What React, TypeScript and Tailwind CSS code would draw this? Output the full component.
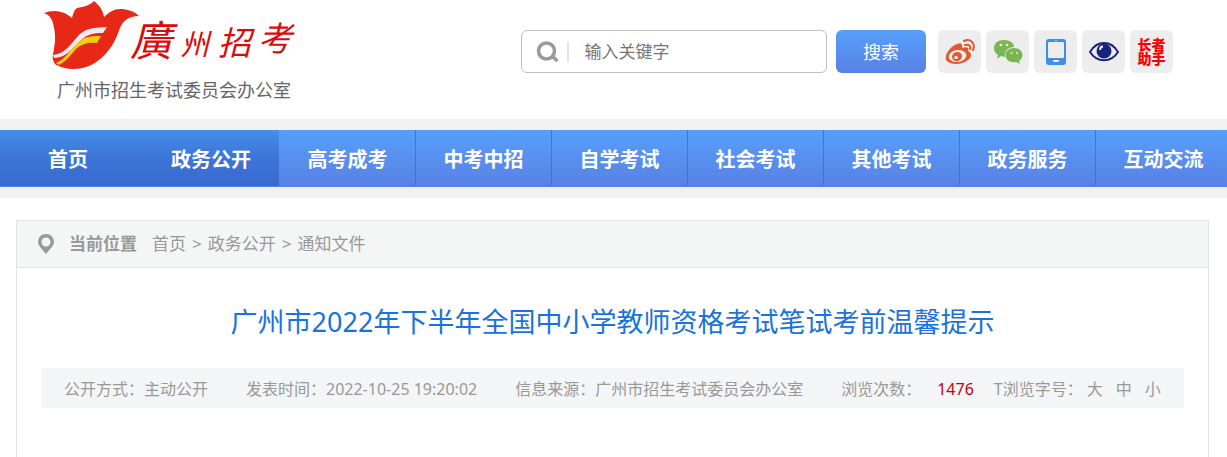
import React from "react";

const navItems = ["高考成考", "中考中招", "自学考试", "社会考试", "其他考试", "政务服务", "互动交流"];

function Logo() {
  return (
    <svg width="256" height="74" viewBox="42 0 256 74" role="img" aria-label="廣州招考">
      <path
        fill="#e82817"
        d="M44 13C49 11 55 10 61 12C66 13 69 16 72 18C73 14 74 10 77 8C84 7 90 5 94 1C99 5 103 10 104 17C109 12 114 9 120 9C127 9 134 11 139 16C130 16 123 20 120 28C117 37 113 45 108 51C99 62 88 69 73 69C66 69 61 67 56 65C53 62 52 58 53 54C55 44 56 37 54 28C53 20 50 15 44 13Z"
      />
      <path fill="#f5e9f3" d="M53 55C67 53 70 44 80 34C88 27 97 28 107 27L103 33C93 33 87 34 80 41C72 48 68 57 54 58Z" />
      <path fill="#edcf0c" d="M56 63C67 58 71 48 80 41C86 36 92 36 101 36L97 43C88 42 82 44 77 48C71 54 67 61 59 65Z" />
      <g fill="#d90b0b" className="font-['Noto_Sans_CJK_TC',sans-serif] italic">
        <text x="130" y="56" fontSize="42">廣</text>
        <text x="180" y="55" fontSize="29">州</text>
        <text x="218" y="55" fontSize="33">招</text>
        <text x="258" y="51" fontSize="34">考</text>
      </g>
    </svg>
  );
}

function WeiboIcon() {
  return (
    <svg width="32" height="28" viewBox="0 0 32 28" aria-hidden="true">
      <path fill="#e0592f" d="M13 6C17 4 19 6 18 10C23 8 26 10 24 13C28 15 28 19 24 22C18 27 7 27 3 23C-1 19 5 9 13 6Z" />
      <ellipse cx="13.500" cy="18" rx="9" ry="6" fill="#ededed" transform="rotate(-8 13.500 18)" />
      <ellipse cx="13" cy="18.500" rx="5" ry="4.500" fill="#e0592f" transform="rotate(-20 13 18.500)" />
      <ellipse cx="12" cy="19.500" rx="2" ry="1.500" fill="#ededed" />
      <path d="M20 3C26 0 32 5 29 12M21 7C25 6 27 8 26 11" fill="none" stroke="#e0592f" strokeWidth="2" strokeLinecap="round" />
    </svg>
  );
}

function WechatIcon() {
  return (
    <svg width="30" height="26" viewBox="0 0 30 26" aria-hidden="true">
      <path fill="#7bb653" d="M11 1C17 1 21 4 21 8C15 8 11 12 12 18L8 17L4 20L5 16C2 14 1 12 1 9C1 4 5 1 11 1Z" />
      <path fill="#7bb653" d="M21 9C26 9 29.500 12 29.500 16C29.500 19 28 20 26 22L27 25L23 23C17 24 12.500 21 12.500 16C12.500 12 16 9 21 9Z" />
      <g fill="#ededed">
        <circle cx="8" cy="6" r="1.300" />
        <circle cx="14" cy="6" r="1.300" />
        <circle cx="18.500" cy="14" r="1" />
        <circle cx="24" cy="14" r="1" />
      </g>
    </svg>
  );
}

function TabletIcon() {
  return (
    <svg width="20" height="26" viewBox="0 0 20 26" aria-hidden="true">
      <rect width="20" height="26" rx="3" fill="#3d8fe5" />
      <rect x="2" y="3" width="16" height="16" rx="1" fill="#ededed" />
      <rect x="7" y="21" width="6" height="2" fill="#ededed" />
      <circle cx="10" cy="1.500" r="0.700" fill="#ededed" />
    </svg>
  );
}

function EyeIcon() {
  return (
    <svg width="30" height="22" viewBox="0 0 30 22" aria-hidden="true">
      <path d="M1 11C8 -1 22 -1 29 11C22 22 8 22 1 11Z" fill="#ededed" stroke="#17247d" strokeWidth="2" />
      <circle cx="15" cy="10" r="7.500" fill="#17247d" />
      <path d="M11 9C11 7 12 5.500 14 5.500" fill="none" stroke="#ededed" strokeWidth="2" />
    </svg>
  );
}

const tile = "flex h-[43px] w-[43px] shrink-0 items-center justify-center rounded-md bg-[#ededed]";
const navLink = "flex h-14 w-[136px] shrink-0 items-center justify-center pt-[3px]";

export default function App() {
  return (
    <div className="flex min-h-screen flex-col overflow-hidden bg-white font-['Noto_Sans','Noto_Sans_CJK_SC',sans-serif] text-[#999]">
      <header className="flex h-[119px] shrink-0 items-start">
        <a href="#" className="ml-[42px] block w-[260px] shrink-0">
          <Logo />
          <span className="ml-[15px] block text-[18px] leading-8 whitespace-nowrap text-[#666]">广州市招生考试委员会办公室</span>
        </a>
        <form className="mt-[30px] ml-[219px] flex shrink-0 gap-[9px]" onSubmit={(e) => e.preventDefault()}>
          <label className="flex h-[43px] w-[306px] items-center rounded-md border border-[#bfbfbf] bg-white">
            <svg className="ml-[14px] shrink-0" width="24" height="24" viewBox="0 0 24 24" fill="none" stroke="#999" strokeWidth="3.500" aria-hidden="true">
              <circle cx="10.500" cy="11" r="8" />
              <path d="M16 16L21.500 21" />
            </svg>
            <span className="ml-[7px] h-5 w-0.5 bg-[#e4e4e4]" />
            <input
              aria-label="输入关键字"
              placeholder="输入关键字"
              className="ml-4 w-full min-w-0 bg-transparent text-[17px] text-[#757575] outline-none placeholder:text-[#757575]"
            />
          </label>
          <button className="h-[43px] w-[90px] rounded-md bg-linear-to-b from-[#579ffb] to-[#5881e4] pt-0.5 text-[18px] text-white">搜索</button>
        </form>
        <div className="mt-[30px] ml-3 flex gap-[5px]">
          <a href="#" aria-label="微博" className={tile}><WeiboIcon /></a>
          <a href="#" aria-label="微信" className={tile}><WechatIcon /></a>
          <a href="#" aria-label="手机版" className={tile}><TabletIcon /></a>
          <a href="#" aria-label="无障碍" className={tile}><EyeIcon /></a>
          <a href="#" className={`${tile} flex-col text-[14px] leading-[14px] font-black text-[#f00]`}>
            <span>长者</span>
            <span>助手</span>
          </a>
        </div>
      </header>
      <div className="shrink-0 bg-[#f1f1f1] py-[11px]">
        <nav className="flex h-[57px] overflow-hidden border-b border-[#5083ea] bg-linear-to-b from-[#579ffb] to-[#5881e4] text-[20px] font-bold text-white">
          <div className="flex shrink-0 gap-[7px] bg-linear-to-b from-[#458ee9] via-[#3d75d7] to-[#3a68d0]">
            <a href="#" className={navLink}>首页</a>
            <a href="#" className={navLink}>政务公开</a>
          </div>
          {navItems.map((item) => (
            <a key={item} href="#" className={`${navLink} border-l border-[#4374d4] first-of-type:border-transparent`}>{item}</a>
          ))}
        </nav>
      </div>
      <main className="mt-[22px] mr-[18px] ml-4 grow border border-b-0 border-[#e0e4e4]">
        <div className="flex h-[47px] items-center border-b border-[#e0e4e4] bg-[#f4f6f5] pl-[21px] text-[17px]">
          <svg width="16" height="20" viewBox="0 0 16 20" aria-hidden="true">
            <path
              fill="#999"
              fillRule="evenodd"
              d="M8 0C12.500 0 16 3.500 16 8C16 12 11 16 8 20C5 16 0 12 0 8C0 3.500 3.500 0 8 0ZM8 3.500A4.500 4.500 0 1 0 8 12.500A4.500 4.500 0 1 0 8 3.500Z"
            />
          </svg>
          <strong className="mx-[15px]">当前位置</strong>
          <div className="flex gap-[6px]">
            <a href="#">首页</a>
            <span>&gt;</span>
            <a href="#">政务公开</a>
            <span>&gt;</span>
            <a href="#">通知文件</a>
          </div>
        </div>
        <h1 className="mt-8 text-center text-[27px] leading-[44px] text-[#1873dc]">广州市2022年下半年全国中小学教师资格考试笔试考前温馨提示</h1>
        <div className="mx-6 mt-6 flex h-10 items-center bg-[#f3f5f7] pt-0.5 pl-[23px] text-[16px] whitespace-nowrap">
          <span>公开方式：主动公开</span>
          <span className="ml-[38px]">发表时间：2022-10-25 19:20:02</span>
          <span className="ml-[38px]">信息来源：广州市招生考试委员会办公室</span>
          <span className="ml-[38px]">浏览次数：</span>
          <span className="ml-4 text-[#c7000b]">1476</span>
          <span className="ml-5">T浏览字号：</span>
          <div className="ml-1 flex gap-[13px]">
            <button>大</button>
            <button>中</button>
            <button>小</button>
          </div>
        </div>
      </main>
    </div>
  );
}
